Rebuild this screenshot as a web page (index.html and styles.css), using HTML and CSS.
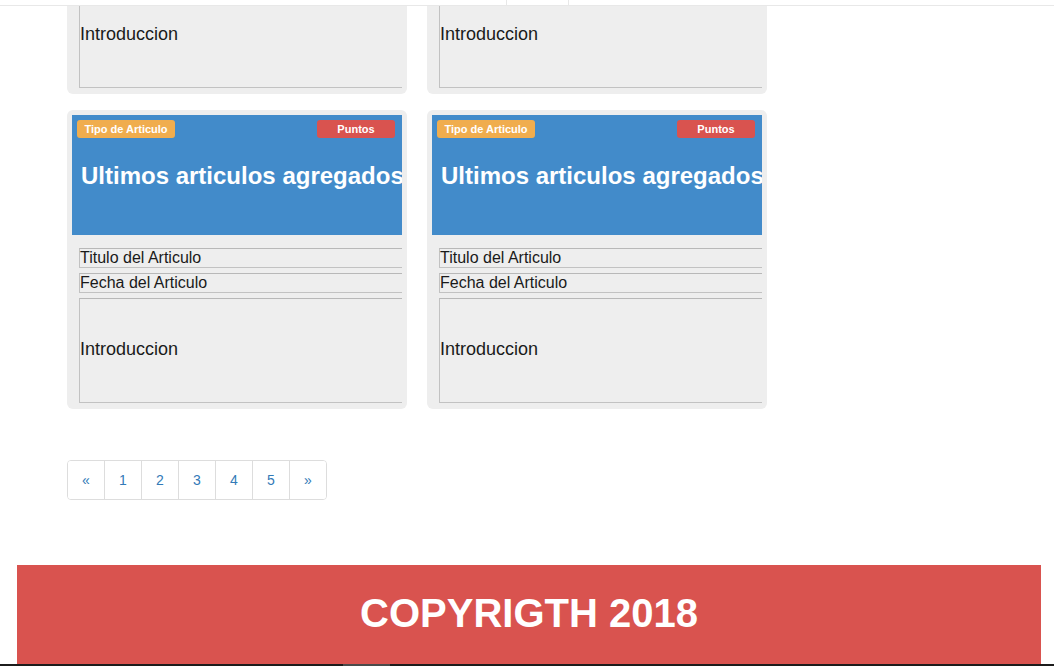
FILE: index.html
```html
<!DOCTYPE html>
<html lang="es">
<head>
<meta charset="utf-8">
<title>Articulos</title>
<link rel="stylesheet" href="styles.css">
</head>
<body>
<header class="topbar">
  <span class="divider divider-a"></span>
  <span class="divider divider-b"></span>
</header>

<main class="main">
  <section class="grid">
    <article class="card">
      <div class="card-head">
        <div class="badges"><span class="badge badge-type">Tipo de Articulo</span><span class="badge badge-points">Puntos</span></div>
        <h2 class="card-title">Ultimos articulos agregados</h2>
      </div>
      <div class="fields">
        <div class="field">Titulo del Articulo</div>
        <div class="field">Fecha del Articulo</div>
        <div class="field field-intro">Introduccion</div>
      </div>
    </article>
    <article class="card">
      <div class="card-head">
        <div class="badges"><span class="badge badge-type">Tipo de Articulo</span><span class="badge badge-points">Puntos</span></div>
        <h2 class="card-title">Ultimos articulos agregados</h2>
      </div>
      <div class="fields">
        <div class="field">Titulo del Articulo</div>
        <div class="field">Fecha del Articulo</div>
        <div class="field field-intro">Introduccion</div>
      </div>
    </article>
    <article class="card">
      <div class="card-head">
        <div class="badges"><span class="badge badge-type">Tipo de Articulo</span><span class="badge badge-points">Puntos</span></div>
        <h2 class="card-title">Ultimos articulos agregados</h2>
      </div>
      <div class="fields">
        <div class="field">Titulo del Articulo</div>
        <div class="field">Fecha del Articulo</div>
        <div class="field field-intro">Introduccion</div>
      </div>
    </article>
    <article class="card">
      <div class="card-head">
        <div class="badges"><span class="badge badge-type">Tipo de Articulo</span><span class="badge badge-points">Puntos</span></div>
        <h2 class="card-title">Ultimos articulos agregados</h2>
      </div>
      <div class="fields">
        <div class="field">Titulo del Articulo</div>
        <div class="field">Fecha del Articulo</div>
        <div class="field field-intro">Introduccion</div>
      </div>
    </article>
  </section>

  <nav class="pagination">
    <a class="page" href="#">&laquo;</a>
    <a class="page" href="#">1</a>
    <a class="page" href="#">2</a>
    <a class="page" href="#">3</a>
    <a class="page" href="#">4</a>
    <a class="page" href="#">5</a>
    <a class="page" href="#">&raquo;</a>
  </nav>
</main>

<footer class="footer">
  <h1 class="footer-text">COPYRIGTH 2018</h1>
</footer>

<div class="screen-edge"><span class="edge-seg"></span></div>
</body>
</html>
```

FILE: styles.css
```css
html, body {
  margin: 0;
  padding: 0;
  background: #ffffff;
  font-family: "Liberation Sans", Arial, sans-serif;
  overflow: hidden;
}

.topbar {
  position: fixed;
  top: 0;
  left: 0;
  right: 0;
  height: 5px;
  background: #ffffff;
  border-bottom: 1px solid #e8e8e8;
  z-index: 10;
}

.divider {
  position: absolute;
  top: 0;
  width: 1px;
  height: 5px;
  background: #e8e8e8;
}

.divider-a { left: 506px; }
.divider-b { left: 568px; }

.main {
  padding-left: 67px;
}

.grid {
  display: grid;
  grid-template-columns: 340px 340px;
  column-gap: 20px;
  row-gap: 16px;
  margin-top: -205px;
}

.card {
  background: #eeeeee;
  border-radius: 6px;
  padding: 5px 5px 6px 5px;
  height: 299px;
  box-sizing: border-box;
}

.card-head {
  background: #428bca;
  height: 120px;
  overflow: hidden;
  padding: 5px 7px 0 5px;
  box-sizing: border-box;
}

.badges {
  display: flex;
  justify-content: space-between;
}

.badge {
  display: inline-block;
  height: 18px;
  line-height: 18px;
  border-radius: 3px;
  color: #ffffff;
  font-size: 11px;
  font-weight: bold;
  text-align: center;
  white-space: nowrap;
}

.badge-type {
  background: #f0ad4e;
  width: 98px;
}

.badge-points {
  background: #d9534f;
  width: 78px;
}

.card-title {
  margin: 24px 0 0 4px;
  color: #ffffff;
  font-size: 24px;
  font-weight: bold;
  line-height: 28px;
  white-space: nowrap;
}

.fields {
  width: 330px;
  overflow: hidden;
  padding-top: 13px;
  display: flex;
  flex-direction: column;
  gap: 5px;
}

.field {
  margin-left: 7px;
  width: 330px;
  height: 20px;
  box-sizing: border-box;
  border: 1px solid #c2c2c2;
  border-top-color: #b8b8b8;
  font-size: 16px;
  line-height: 18px;
  color: #1a1a1a;
  padding-left: 0;
  white-space: nowrap;
}

.field-intro {
  height: 105px;
  font-size: 18px;
  display: flex;
  align-items: center;
  padding-bottom: 3px;
}

.pagination {
  display: flex;
  margin-top: 51px;
  width: max-content;
  border: 1px solid #dddddd;
  border-radius: 4px;
  overflow: hidden;
}

.page {
  width: 37px;
  height: 38px;
  line-height: 38px;
  text-align: center;
  font-size: 14px;
  color: #337ab7;
  text-decoration: none;
  background: #ffffff;
  border-left: 1px solid #dddddd;
  box-sizing: border-box;
}

.page:first-child {
  border-left: none;
  width: 36px;
}

.footer {
  margin: 65px 0 0 17px;
  width: 1024px;
  background: #d9534f;
  padding: 26px 0 60px;
}

.footer-text {
  margin: 0;
  text-align: center;
  color: #ffffff;
  font-size: 40px;
  font-weight: bold;
  line-height: 44px;
}

.screen-edge {
  position: fixed;
  left: 0;
  right: 0;
  bottom: 0;
  height: 2px;
  background: #1c1c1c;
  z-index: 10;
}

.edge-seg {
  position: absolute;
  left: 343px;
  width: 47px;
  top: 0;
  height: 2px;
  background: #4a4a4a;
}
```
